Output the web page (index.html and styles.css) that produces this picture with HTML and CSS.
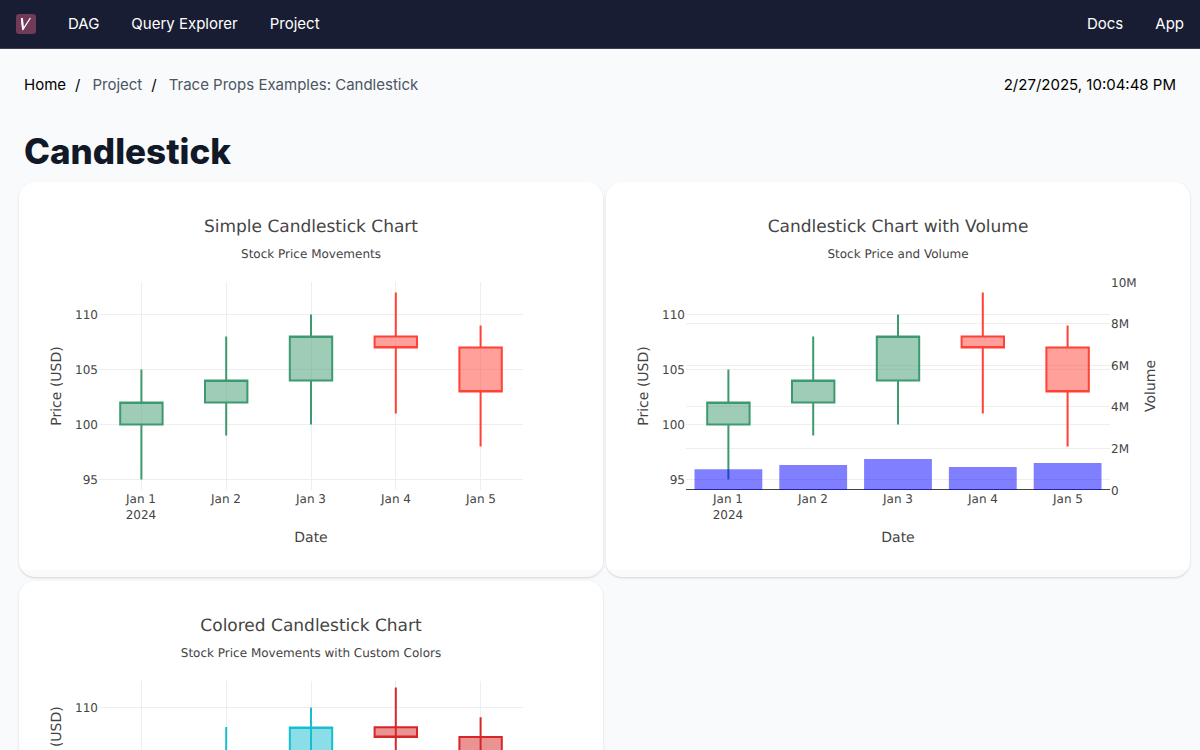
FILE: index.html
```html
<!DOCTYPE html>
<html lang="en">
<head>
<meta charset="utf-8">
<title>Candlestick</title>
<meta name="viewport" content="width=device-width, initial-scale=1">
<link rel="stylesheet" href="styles.css">
</head>
<body>
<header class="topbar">
  <nav class="nav">
    <a class="logo" href="#" aria-label="Main page">
      <svg viewBox="0 0 20 20" aria-hidden="true"><rect width="20" height="20" rx="3" fill="#713b57"/><path d="M5.6 4 6.8 15.6 14.4 4" fill="none" stroke="#fff" stroke-width="1.3" stroke-linejoin="round"/><path d="M5.9 4 7.1 15" stroke="#fff" stroke-width="2" fill="none"/></svg>
    </a>
    <a href="#">DAG</a>
    <a href="#">Query Explorer</a>
    <a href="#">Project</a>
  </nav>
  <nav class="nav">
    <a href="#">Docs</a>
    <a href="#">App</a>
  </nav>
</header>
<div class="crumbbar">
  <nav class="crumbs" aria-label="Breadcrumb">
    <a class="home" href="#">Home</a><span class="sep">/</span>
    <a href="#">Project</a><span class="sep">/</span>
    <a href="#">Trace Props Examples: Candlestick</a>
  </nav>
  <time datetime="2025-02-27T22:04:48">2/27/2025, 10:04:48 PM</time>
</div>
<main>
  <h1>Candlestick</h1>
  <div class="grid">
    <section class="card">
      <svg class="chart" viewBox="0 0 584 388">
        <path class="gridline" d="M122.5 100V308M207.5 100V308M292.5 100V308M376.5 100V308M461.5 100V308M80 132.5H504M80 187.5H504M80 242.5H504M80 297.5H504"/>
        <g class="up">
          <path d="M122.4 187.5V220.5M122.4 242.5V297.5M101.2 221H143.6M101.2 220.5H143.6V242.5H101.2Z"/>
          <path d="M207.2 154.5V198.5M207.2 220.5V253.5M186 199H228.4M186 198.5H228.4V220.5H186Z"/>
          <path d="M292 132.5V154.5M292 198.5V242.5M270.8 155H313.2M270.8 154.5H313.2V198.5H270.8Z"/>
        </g>
        <g class="down">
          <path d="M376.8 110.5V154.5M376.8 165.5V231.5M355.6 165H398M355.6 154.5H398V165.5H355.6Z"/>
          <path d="M461.6 143.5V165.5M461.6 209.5V264.5M440.4 209H482.8M440.4 165.5H482.8V209.5H440.4Z"/>
        </g>
        <g class="end"><text x="79" y="137">110</text><text x="79" y="192">105</text><text x="79" y="247">100</text><text x="79" y="302">95</text></g>
        <g class="mid"><text x="122" y="321">Jan 1</text><text x="122" y="337">2024</text><text x="207" y="321">Jan 2</text><text x="292" y="321">Jan 3</text><text x="377" y="321">Jan 4</text><text x="462" y="321">Jan 5</text>
          <text x="292" y="76">Stock Price Movements</text>
          <text class="title" x="292" y="50">Simple Candlestick Chart</text>
          <text class="axis" x="292" y="360">Date</text>
          <text class="axis" transform="translate(42 204) rotate(-90)">Price (USD)</text></g>
      </svg>
    </section>
    <section class="card">
      <svg class="chart" viewBox="0 0 584 388">
        <path class="gridline" d="M80 132.5H504M80 187.5H504M80 242.5H504M80 297.5H504M80 141.5H504M80 183.5H504M80 224.5H504M80 266.5H504"/>
        <path class="zero" d="M80 307.5H504"/>
        <g class="up">
          <path d="M122.4 187.5V220.5M122.4 242.5V297.5M101.2 221H143.6M101.2 220.5H143.6V242.5H101.2Z"/>
          <path d="M207.2 154.5V198.5M207.2 220.5V253.5M186 199H228.4M186 198.5H228.4V220.5H186Z"/>
          <path d="M292 132.5V154.5M292 198.5V242.5M270.8 155H313.2M270.8 154.5H313.2V198.5H270.8Z"/>
        </g>
        <g class="down">
          <path d="M376.8 110.5V154.5M376.8 165.5V231.5M355.6 165H398M355.6 154.5H398V165.5H355.6Z"/>
          <path d="M461.6 143.5V165.5M461.6 209.5V264.5M440.4 209H482.8M440.4 165.5H482.8V209.5H440.4Z"/>
        </g>
        <path class="bars" d="M88.5 308V287.2H156.3V308ZM173.3 308V283H241.1V308ZM258.1 308V276.9H325.9V308ZM342.9 308V285.1H410.7V308ZM427.7 308V281H495.5V308Z"/>
        <g class="end"><text x="79" y="137">110</text><text x="79" y="192">105</text><text x="79" y="247">100</text><text x="79" y="302">95</text></g>
        <g><text x="505" y="105">10M</text><text x="505" y="146">8M</text><text x="505" y="188">6M</text><text x="505" y="229">4M</text><text x="505" y="271">2M</text><text x="505" y="313">0</text></g>
        <g class="mid"><text x="122" y="321">Jan 1</text><text x="122" y="337">2024</text><text x="207" y="321">Jan 2</text><text x="292" y="321">Jan 3</text><text x="377" y="321">Jan 4</text><text x="462" y="321">Jan 5</text>
          <text x="292" y="76">Stock Price and Volume</text>
          <text class="title" x="292" y="50">Candlestick Chart with Volume</text>
          <text class="axis" x="292" y="360">Date</text>
          <text class="axis" transform="translate(42 204) rotate(-90)">Price (USD)</text>
          <text class="axis" transform="translate(549 204) rotate(-90)">Volume</text></g>
      </svg>
    </section>
    <section class="card">
      <svg class="chart custom" viewBox="0 0 584 388">
        <path class="gridline" d="M122.5 100V287M207.5 100V287M292.5 100V287M376.5 100V287M461.5 100V287M80 126.5H504M80 175.5H504M80 225.5H504M80 274.5H504"/>
        <g class="up">
          <path d="M122.4 175.5V274.5M101.2 205.5H143.6M101.2 205H143.6V225H101.2Z"/>
          <path d="M207.2 146V235M186 186H228.4M186 185.5H228.4V205H186Z"/>
          <path d="M292 126.5V225M270.8 147H313.2M270.8 146.5H313.2V185.5H270.8Z"/>
        </g>
        <g class="down">
          <path d="M376.8 106.5V215M355.6 155.5H398M355.6 146.2H398V156H355.6Z"/>
          <path d="M461.6 136.2V244.5M440.4 195H482.8M440.4 156.1H482.8V195.3H440.4Z"/>
        </g>
        <g class="end"><text x="79" y="131">110</text><text x="79" y="180">105</text><text x="79" y="230">100</text><text x="79" y="279">95</text></g>
        <g class="mid"><text x="122" y="300">Jan 1</text><text x="122" y="316">2024</text><text x="207" y="300">Jan 2</text><text x="292" y="300">Jan 3</text><text x="377" y="300">Jan 4</text><text x="462" y="300">Jan 5</text>
          <text x="292" y="76">Stock Price Movements with Custom Colors</text>
          <text class="title" x="292" y="50">Colored Candlestick Chart</text>
          <text class="axis" x="292" y="360">Date</text>
          <text class="axis" transform="translate(42 165) rotate(-90)">Price (USD)</text></g>
      </svg>
    </section>
  </div>
</main>
</body>
</html>
```
FILE: styles.css
```css
* { box-sizing: border-box; }
body {
  margin: 0;
  background: #f9fafb;
  color: #000;
  font: 15px/24px Inter, "Liberation Sans", sans-serif;
}
a { color: inherit; text-decoration: none; }

.topbar {
  display: flex;
  justify-content: space-between;
  padding: 12px 16px;
  background: #191d33;
  border-bottom: 1px solid #374151;
  color: #fff;
}
.nav { display: flex; align-items: center; gap: 32px; }
.logo { display: flex; }
.logo svg { width: 20px; height: 20px; }

.crumbbar {
  display: flex;
  justify-content: space-between;
  padding: 24px;
}
.crumbs { display: flex; color: #4b5563; }
.crumbs .home, .sep { color: #000; }
.sep { margin: 0 12px 0 9px; }

h1 {
  margin: 0;
  padding: 10px 24px 11px;
  color: #111827;
  font-size: 35px;
  font-weight: 800;
  line-height: 40px;
}
.grid {
  display: grid;
  grid-template-columns: 1fr 1fr;
  gap: 4px 3px;
  padding: 0 10px 24px 19px;
}
.card {
  padding-bottom: 7px;
  overflow: hidden;
  background: #f9fafb;
  border-radius: 16px;
  box-shadow: 0 1px 3px rgba(0, 0, 0, 0.1), 0 1px 2px rgba(0, 0, 0, 0.06);
}
.chart {
  display: block;
  width: 100%;
  height: auto;
  background: #fff;
  font-family: "DejaVu Sans", sans-serif;
  font-size: 12px;
  text-rendering: geometricPrecision;
}
.chart text { fill: #444; }
.chart .title { font-size: 17px; }
.chart .axis { font-size: 14px; }
.end { text-anchor: end; }
.mid { text-anchor: middle; }
.gridline { stroke: #eee; fill: none; }
.zero { stroke: #444; }
.bars { fill: rgba(0, 0, 255, 0.5); }
.up, .down { stroke-width: 2; fill-opacity: 0.5; }
.up { stroke: #3d9970; fill: #3d9970; }
.down { stroke: #ff4136; fill: #ff4136; }
.custom .up { stroke: #17becf; fill: #17becf; }
.custom .down { stroke: #d62728; fill: #d62728; }
```
